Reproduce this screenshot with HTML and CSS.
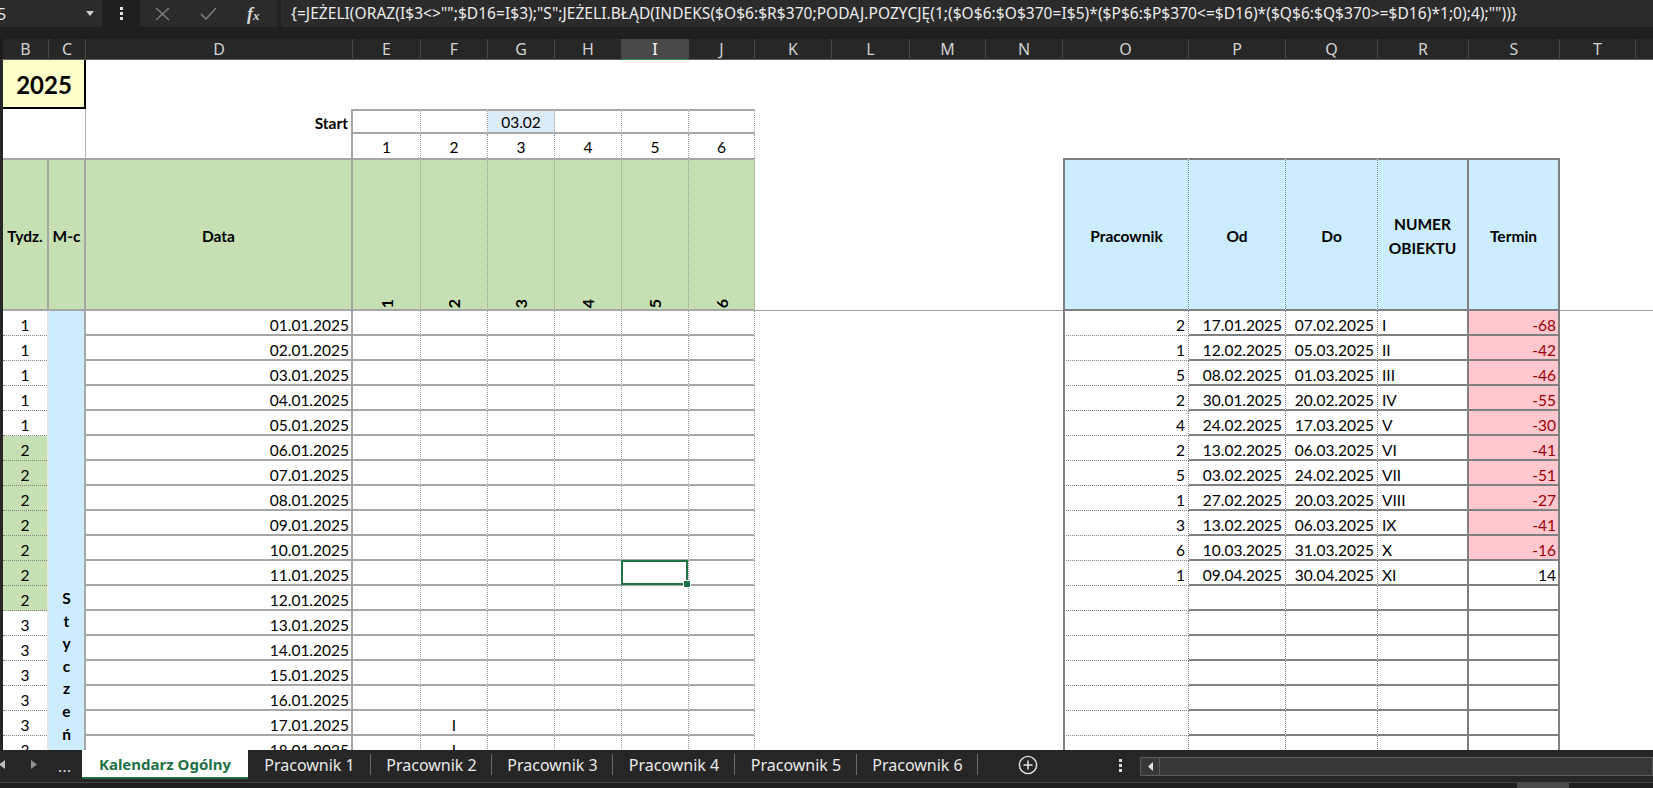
FILE: index.html
```html
<!DOCTYPE html>
<html lang="pl">
<head>
<meta charset="utf-8">
<title>Kalendarz Ogólny</title>
<link rel="stylesheet" href="styles.css">
</head>
<body>
<div class="app">
  <div class="topbar">
    <div class="namebox"><span class="nbtxt">5</span><svg class="nbarrow" width="8" height="5" viewBox="0 0 8 5"><path d="M0 0H8L4 5Z" fill="#cfcfcf"/></svg></div>
    <div class="kebab"><i></i><i></i><i></i></div>
    <div class="fxbtns">
      <svg width="15" height="14" viewBox="0 0 15 14"><path d="M1 1L14 13M14 1L1 13" stroke="#7c7c7c" stroke-width="1.5" fill="none"/></svg>
      <svg width="17" height="13" viewBox="0 0 17 13"><path d="M1 7L6 12L16 1" stroke="#7c7c7c" stroke-width="1.6" fill="none"/></svg>
      <span class="fx">f<span class="fxx">x</span></span>
    </div>
    <div class="formula">{=JEŻELI(ORAZ(I$3&lt;&gt;"";$D16=I$3);"S";JEŻELI.BŁĄD(INDEKS($O$6:$R$370;PODAJ.POZYCJĘ(1;($O$6:$O$370=I$5)*($P$6:$P$370&lt;=$D16)*($Q$6:$Q$370&gt;=$D16)*1;0);4);""))}</div>
  </div>

  <div class="colheads">
    <div class="ch">B</div><div class="ch">C</div><div class="ch">D</div><div class="ch">E</div><div class="ch">F</div><div class="ch">G</div><div class="ch">H</div><div class="ch on">I</div><div class="ch">J</div><div class="ch">K</div><div class="ch">L</div><div class="ch">M</div><div class="ch">N</div><div class="ch">O</div><div class="ch">P</div><div class="ch">Q</div><div class="ch">R</div><div class="ch">S</div><div class="ch">T</div><div class="ch last"></div>
  </div>

  <div class="sheet">
    <!-- row 1 -->
    <div class="c yr">2025</div><div class="c sp18"></div>
    <!-- row 2 -->
    <div class="c bcb"></div><div class="c st">Start</div>
    <div class="c s1"></div><div class="c s1"></div><div class="c s1 sg">03.02</div><div class="c s1"></div><div class="c s1"></div><div class="c s1"></div>
    <div class="c sp11"></div>
    <!-- row 3 -->
    <div class="c bcb"></div><div class="c st"></div>
    <div class="c s2">1</div><div class="c s2">2</div><div class="c s2">3</div><div class="c s2">4</div><div class="c s2">5</div><div class="c s2">6</div>
    <div class="c sp11"></div>
    <!-- row 4 header -->
    <div class="c h hl">Tydz.</div><div class="c h hl">M-c</div><div class="c h hl">Data</div>
    <div class="c h he"><span class="rot">1</span></div><div class="c h he"><span class="rot">2</span></div><div class="c h he"><span class="rot">3</span></div><div class="c h he"><span class="rot">4</span></div><div class="c h he"><span class="rot">5</span></div><div class="c h he"><span class="rot">6</span></div>
    <div class="c fz sp4"></div>
    <div class="c rh rh-o">Pracownik</div><div class="c rh">Od</div><div class="c rh">Do</div><div class="c rh rh-r">NUMER<br>OBIEKTU</div><div class="c rh rh-s">Termin</div>
    <div class="c fz sp2"></div>

    <!-- data 1 -->
    <div class="c wk">1</div><div class="c mon"><span class="vt">Styczeń</span></div><div class="c dt">01.01.2025</div>
    <div class="c gr"></div><div class="c gr"></div><div class="c gr"></div><div class="c gr"></div><div class="c gr"></div><div class="c gr"></div>
    <div class="c sp4"></div>
    <div class="c tp">2</div><div class="c td">17.01.2025</div><div class="c td">07.02.2025</div><div class="c tr">I</div><div class="c ts neg">-68</div>
    <div class="c sp2"></div>
    <!-- data 2 -->
    <div class="c wk">1</div><div class="c dt">02.01.2025</div>
    <div class="c gr"></div><div class="c gr"></div><div class="c gr"></div><div class="c gr"></div><div class="c gr"></div><div class="c gr"></div>
    <div class="c sp4"></div>
    <div class="c tp">1</div><div class="c td">12.02.2025</div><div class="c td">05.03.2025</div><div class="c tr">II</div><div class="c ts neg">-42</div>
    <div class="c sp2"></div>
    <!-- data 3 -->
    <div class="c wk">1</div><div class="c dt">03.01.2025</div>
    <div class="c gr"></div><div class="c gr"></div><div class="c gr"></div><div class="c gr"></div><div class="c gr"></div><div class="c gr"></div>
    <div class="c sp4"></div>
    <div class="c tp">5</div><div class="c td">08.02.2025</div><div class="c td">01.03.2025</div><div class="c tr">III</div><div class="c ts neg">-46</div>
    <div class="c sp2"></div>
    <!-- data 4 -->
    <div class="c wk">1</div><div class="c dt">04.01.2025</div>
    <div class="c gr"></div><div class="c gr"></div><div class="c gr"></div><div class="c gr"></div><div class="c gr"></div><div class="c gr"></div>
    <div class="c sp4"></div>
    <div class="c tp">2</div><div class="c td">30.01.2025</div><div class="c td">20.02.2025</div><div class="c tr">IV</div><div class="c ts neg">-55</div>
    <div class="c sp2"></div>
    <!-- data 5 -->
    <div class="c wk">1</div><div class="c dt">05.01.2025</div>
    <div class="c gr"></div><div class="c gr"></div><div class="c gr"></div><div class="c gr"></div><div class="c gr"></div><div class="c gr"></div>
    <div class="c sp4"></div>
    <div class="c tp">4</div><div class="c td">24.02.2025</div><div class="c td">17.03.2025</div><div class="c tr">V</div><div class="c ts neg">-30</div>
    <div class="c sp2"></div>
    <!-- data 6 -->
    <div class="c wk g">2</div><div class="c dt">06.01.2025</div>
    <div class="c gr"></div><div class="c gr"></div><div class="c gr"></div><div class="c gr"></div><div class="c gr"></div><div class="c gr"></div>
    <div class="c sp4"></div>
    <div class="c tp">2</div><div class="c td">13.02.2025</div><div class="c td">06.03.2025</div><div class="c tr">VI</div><div class="c ts neg">-41</div>
    <div class="c sp2"></div>
    <!-- data 7 -->
    <div class="c wk g">2</div><div class="c dt">07.01.2025</div>
    <div class="c gr"></div><div class="c gr"></div><div class="c gr"></div><div class="c gr"></div><div class="c gr"></div><div class="c gr"></div>
    <div class="c sp4"></div>
    <div class="c tp">5</div><div class="c td">03.02.2025</div><div class="c td">24.02.2025</div><div class="c tr">VII</div><div class="c ts neg">-51</div>
    <div class="c sp2"></div>
    <!-- data 8 -->
    <div class="c wk g">2</div><div class="c dt">08.01.2025</div>
    <div class="c gr"></div><div class="c gr"></div><div class="c gr"></div><div class="c gr"></div><div class="c gr"></div><div class="c gr"></div>
    <div class="c sp4"></div>
    <div class="c tp">1</div><div class="c td">27.02.2025</div><div class="c td">20.03.2025</div><div class="c tr">VIII</div><div class="c ts neg">-27</div>
    <div class="c sp2"></div>
    <!-- data 9 -->
    <div class="c wk g">2</div><div class="c dt">09.01.2025</div>
    <div class="c gr"></div><div class="c gr"></div><div class="c gr"></div><div class="c gr"></div><div class="c gr"></div><div class="c gr"></div>
    <div class="c sp4"></div>
    <div class="c tp">3</div><div class="c td">13.02.2025</div><div class="c td">06.03.2025</div><div class="c tr">IX</div><div class="c ts neg">-41</div>
    <div class="c sp2"></div>
    <!-- data 10 -->
    <div class="c wk g">2</div><div class="c dt">10.01.2025</div>
    <div class="c gr"></div><div class="c gr"></div><div class="c gr"></div><div class="c gr"></div><div class="c gr"></div><div class="c gr"></div>
    <div class="c sp4"></div>
    <div class="c tp">6</div><div class="c td">10.03.2025</div><div class="c td">31.03.2025</div><div class="c tr">X</div><div class="c ts neg">-16</div>
    <div class="c sp2"></div>
    <!-- data 11 -->
    <div class="c wk g">2</div><div class="c dt">11.01.2025</div>
    <div class="c gr"></div><div class="c gr"></div><div class="c gr"></div><div class="c gr"></div><div class="c gr sel"></div><div class="c gr"></div>
    <div class="c sp4"></div>
    <div class="c tp">1</div><div class="c td">09.04.2025</div><div class="c td">30.04.2025</div><div class="c tr">XI</div><div class="c ts">14</div>
    <div class="c sp2"></div>
    <!-- data 12 -->
    <div class="c wk g">2</div><div class="c dt">12.01.2025</div>
    <div class="c gr"></div><div class="c gr"></div><div class="c gr"></div><div class="c gr"></div><div class="c gr"></div><div class="c gr"></div>
    <div class="c sp4"></div>
    <div class="c tp"></div><div class="c td"></div><div class="c td"></div><div class="c tr"></div><div class="c ts"></div>
    <div class="c sp2"></div>
    <!-- data 13 -->
    <div class="c wk">3</div><div class="c dt">13.01.2025</div>
    <div class="c gr"></div><div class="c gr"></div><div class="c gr"></div><div class="c gr"></div><div class="c gr"></div><div class="c gr"></div>
    <div class="c sp4"></div>
    <div class="c tp"></div><div class="c td"></div><div class="c td"></div><div class="c tr"></div><div class="c ts"></div>
    <div class="c sp2"></div>
    <!-- data 14 -->
    <div class="c wk">3</div><div class="c dt">14.01.2025</div>
    <div class="c gr"></div><div class="c gr"></div><div class="c gr"></div><div class="c gr"></div><div class="c gr"></div><div class="c gr"></div>
    <div class="c sp4"></div>
    <div class="c tp"></div><div class="c td"></div><div class="c td"></div><div class="c tr"></div><div class="c ts"></div>
    <div class="c sp2"></div>
    <!-- data 15 -->
    <div class="c wk">3</div><div class="c dt">15.01.2025</div>
    <div class="c gr"></div><div class="c gr"></div><div class="c gr"></div><div class="c gr"></div><div class="c gr"></div><div class="c gr"></div>
    <div class="c sp4"></div>
    <div class="c tp"></div><div class="c td"></div><div class="c td"></div><div class="c tr"></div><div class="c ts"></div>
    <div class="c sp2"></div>
    <!-- data 16 -->
    <div class="c wk">3</div><div class="c dt">16.01.2025</div>
    <div class="c gr"></div><div class="c gr"></div><div class="c gr"></div><div class="c gr"></div><div class="c gr"></div><div class="c gr"></div>
    <div class="c sp4"></div>
    <div class="c tp"></div><div class="c td"></div><div class="c td"></div><div class="c tr"></div><div class="c ts"></div>
    <div class="c sp2"></div>
    <!-- data 17 -->
    <div class="c wk">3</div><div class="c dt">17.01.2025</div>
    <div class="c gr"></div><div class="c gr">I</div><div class="c gr"></div><div class="c gr"></div><div class="c gr"></div><div class="c gr"></div>
    <div class="c sp4"></div>
    <div class="c tp"></div><div class="c td"></div><div class="c td"></div><div class="c tr"></div><div class="c ts"></div>
    <div class="c sp2"></div>
    <!-- data 18 -->
    <div class="c wk">3</div><div class="c dt">18.01.2025</div>
    <div class="c gr"></div><div class="c gr">I</div><div class="c gr"></div><div class="c gr"></div><div class="c gr"></div><div class="c gr"></div>
    <div class="c sp4"></div>
    <div class="c tp"></div><div class="c td"></div><div class="c td"></div><div class="c tr"></div><div class="c ts"></div>
    <div class="c sp2"></div>
  </div>

  <div class="tabbar">
    <div class="tabnav">
      <svg class="navl" width="6" height="9" viewBox="0 0 6 9"><path d="M6 0V9L0 4.5Z" fill="#bdbdbd"/></svg>
      <svg class="navr" width="6" height="9" viewBox="0 0 6 9"><path d="M0 0V9L6 4.5Z" fill="#8f8f8f"/></svg>
      <span class="navdots">...</span>
    </div>
    <div class="tab active">Kalendarz Ogólny</div>
    <div class="tab w123">Pracownik 1</div>
    <div class="tab w121">Pracownik 2</div>
    <div class="tab w121">Pracownik 3</div>
    <div class="tab w122">Pracownik 4</div>
    <div class="tab w122">Pracownik 5</div>
    <div class="tab w121">Pracownik 6</div>
    <div class="addtab"><svg width="20" height="20" viewBox="0 0 20 20"><circle cx="10" cy="10" r="8.6" stroke="#e6e6e6" stroke-width="1.4" fill="none"/><path d="M10 5.5V14.5M5.5 10H14.5" stroke="#e6e6e6" stroke-width="1.5"/></svg></div>
    <div class="tbkebab"><i></i><i></i><i></i></div>
    <div class="hscroll"><div class="harrow"><svg width="5" height="9" viewBox="0 0 5 9"><path d="M5 0V9L0 4.5Z" fill="#e0e0e0"/></svg></div></div>
  </div>
  <div class="status"><div class="sthumb"></div></div>
</div>
</body>
</html>
```

FILE: styles.css
```css
* { box-sizing: border-box; margin: 0; padding: 0; }
html, body { width: 1653px; height: 788px; overflow: hidden; background: #1f1f1f; }
body { font-family: Lato, "Noto Sans", sans-serif; }

.app { display: flex; flex-direction: column; width: 1653px; height: 788px; }

/* ---------- formula bar ---------- */
.topbar { height: 39px; flex: none; display: flex; align-items: flex-start; background: #1f1f1f; }
.namebox { width: 102px; height: 27px; background: #2b2b2b; display: flex; align-items: center; justify-content: space-between; padding-right: 8px; color: #e6e6e6; font: 16px "Noto Sans", sans-serif; overflow: hidden; }
.nbtxt { margin-left: -3px; }
.kebab { width: 38px; height: 27px; display: flex; flex-direction: column; align-items: center; justify-content: center; gap: 2px; padding-left: 1px; }
.kebab i, .tbkebab i { display: block; width: 3px; height: 3px; background: #e0e0e0; }
.fxbtns { width: 137px; height: 27px; background: #2b2b2b; display: flex; align-items: center; padding-left: 15px; gap: 30px; }
.fx { font-family: "Liberation Serif", serif; font-style: italic; font-weight: 700; font-size: 18px; color: #d8d8d8; line-height: 1; }
.fxx { font-size: 13px; }
.formula { flex: 1; margin-left: 4px; height: 27px; background: #2b2b2b; color: #ececec; font: 15.5px/27px "Noto Sans", sans-serif; letter-spacing: 0.05px; padding-left: 10px; white-space: nowrap; overflow: hidden; }

/* ---------- column headers ---------- */
.colheads { height: 21px; flex: none; display: grid; grid-template-columns: 46px 37px 267px 68px 67px 67px 67px 67px 66px 77px 78px 76px 77px 126px 97px 92px 91px 91px 76px 1fr; border-left: 3px solid #1b1b1b; background: #272727; border-bottom: 1px solid #5f5f5f; }
.ch { color: #d2d2d2; font: 16px/20px "Noto Sans", sans-serif; text-align: center; border-right: 1px solid #474747; }
.ch.on { background: #484848; color: #ffffff; border-bottom: 2px solid #2e8b57; }
.ch.last { border-right: none; }

/* ---------- sheet ---------- */
.sheet { height: 690px; flex: none; background: #ffffff; border-left: 3px solid #262626; display: grid; overflow: hidden;
  grid-template-columns: 46px 37px 267px 68px 67px 67px 67px 67px 66px 77px 78px 76px 77px 126px 97px 92px 91px 91px 76px 1fr;
  grid-template-rows: 49px 25px 24px 153px repeat(18, 25px); }

.c { display: flex; align-items: flex-end; font-size: 15.5px; line-height: 18px; color: #000; white-space: nowrap; overflow: hidden; min-width: 0; padding-bottom: 2px; }
.sp2 { grid-column: span 2; }
.sp4 { grid-column: span 4; }
.sp11 { grid-column: span 11; }
.sp18 { grid-column: span 18; }

.yr { grid-column: span 2; background: #ffffcc; border-right: 2px solid #000; border-bottom: 2px solid #000; justify-content: center; align-items: center; font-size: 24px; font-weight: 700; line-height: 1; padding: 2px 0 0 1px; }
.bcb { grid-column: span 2; border-right: 1px solid #b4b4b4; }
.st { border-right: 2px solid #a6a6a6; justify-content: flex-end; padding-right: 3px; font-weight: 700; }
.s1 { border-top: 2px solid #a6a6a6; border-bottom: 2px solid #a6a6a6; border-right: 1px dotted #9a9a9a; justify-content: center; padding-bottom: 1px; }
.sg { background: #ddebf7; }
.s2 { border-right: 1px dotted #9a9a9a; justify-content: center; }

.h { background: #c6e0b4; border-top: 2px solid #a6a6a6; border-bottom: 2px solid #a6a6a6; font-weight: 700; padding-bottom: 0; }
.hl { border-right: 2px solid #a6a6a6; align-items: center; justify-content: center; padding-top: 2px; }
.he { border-right: 1px dotted #9a9a9a; justify-content: center; padding-bottom: 1px; }
.rot { writing-mode: vertical-rl; transform: rotate(180deg); line-height: 18px; font-size: 16px; }
.fz { border-bottom: 1px solid #a0a0a0; }

.rh { background: #ccecff; border-top: 2px solid #808080; border-bottom: 2px solid #808080; border-right: 1px dotted #808080; align-items: center; justify-content: center; text-align: center; font-weight: 700; padding: 2px 0 0; }
.rh-o { border-left: 2px solid #808080; }
.rh-r { border-right: 2px solid #808080; line-height: 24px; }
.rh-s { border-right: 2px solid #808080; }

.wk { justify-content: center; border-bottom: 1px dotted #808080; border-right: 2px solid #e4e4e4; padding-bottom: 1px; }
.wk.g { background: #c6e0b4; }
.mon { grid-row: span 18; background: #ccecff; border-right: 2px solid #a6a6a6; flex-direction: column; align-items: center; justify-content: flex-start; padding: 278px 0 0; overflow: hidden; }
.vt { writing-mode: vertical-lr; text-orientation: upright; font-weight: 700; letter-spacing: 4.6px; line-height: 18px; }
.dt { border-bottom: 2px solid #a6a6a6; border-right: 2px solid #a6a6a6; justify-content: flex-end; padding-right: 2px; padding-bottom: 0; }
.gr { border-bottom: 2px solid #a6a6a6; border-right: 1px dotted #9a9a9a; justify-content: center; padding-bottom: 0; }
.sel { position: relative; overflow: visible; }
.sel::after { content: ""; position: absolute; left: -1px; top: -1px; right: 0; bottom: -1px; border: 2px solid #217346; }
.sel::before { content: ""; position: absolute; right: -3px; bottom: -4px; width: 6px; height: 6px; background: #217346; border: 1px solid #fff; z-index: 2; }

.tp { border-left: 2px solid #808080; border-bottom: 1px dotted #808080; border-right: 1px dotted #808080; justify-content: flex-end; padding-right: 3px; padding-bottom: 1px; }
.td { border-bottom: 2px solid #808080; border-right: 1px dotted #808080; justify-content: flex-end; padding-right: 3px; padding-bottom: 0; }
.tr { border-bottom: 2px solid #808080; border-right: 2px solid #808080; justify-content: flex-start; padding-left: 4px; padding-bottom: 0; }
.ts { border-bottom: 2px solid #808080; border-right: 2px solid #808080; justify-content: flex-end; padding-right: 2px; padding-bottom: 0; }
.neg { background: #ffc7ce; color: #9c0006; }

/* ---------- sheet tabs ---------- */
.tabbar { height: 33px; flex: none; display: flex; align-items: flex-start; background: #262626; border-bottom: 1px solid #444; font-family: "Noto Sans", sans-serif; }
.tabnav { width: 82px; height: 29px; display: flex; align-items: center; }
.navl { margin-left: -1px; }
.navr { margin-left: 26px; }
.navdots { margin-left: 21px; color: #e0e0e0; font-size: 15px; line-height: 1; padding-top: 4px; letter-spacing: 0.5px; }
.tab { height: 29px; display: flex; align-items: center; justify-content: center; color: #eaeaea; font-size: 16px; white-space: nowrap; position: relative; }
.tab::after { content: ""; position: absolute; right: 0; top: 4px; bottom: 4px; width: 1px; background: #6a6a6a; }
.tab.active { width: 166px; background: #ffffff; color: #1e7145; font-weight: 700; font-size: 15px; border-bottom: 2px solid #1e7145; padding-top: 1px; }
.tab.active::after { display: none; }
.w121 { width: 121px; }
.w122 { width: 122px; }
.w123 { width: 123px; }
.addtab { width: 100px; height: 29px; display: flex; align-items: center; justify-content: center; }
.tbkebab { width: 62px; height: 29px; display: flex; flex-direction: column; align-items: flex-end; justify-content: center; gap: 2px; padding-right: 18px; padding-top: 2px; }
.hscroll { flex: 1; height: 19px; margin-top: 7px; border: 1px solid #5c5c5c; background: #373737; display: flex; }
.harrow { width: 19px; height: 17px; border-right: 1px solid #5c5c5c; display: flex; align-items: center; justify-content: center; }
.status { flex: 1; background: #1f1f1f; position: relative; }
.sthumb { position: absolute; left: 1517px; top: 0; width: 52px; bottom: 0; background: #4a4a4a; }
```
